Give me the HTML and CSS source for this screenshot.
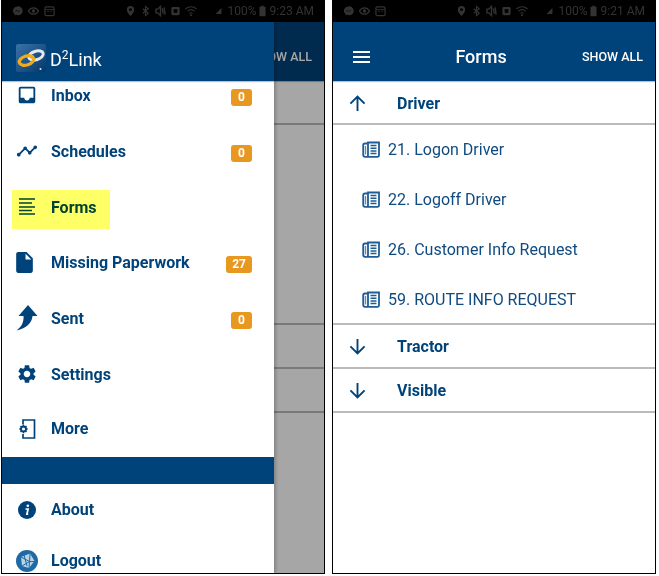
FILE: index.html
```html
<!DOCTYPE html>
<html lang="en">
<head>
    <meta charset="UTF-8">
    <meta name="viewport" content="width=device-width, initial-scale=1.0">
    <title>D2Link - Forms</title>
    <link rel="stylesheet" href="styles.css">
</head>
<body>
    <!-- shared icons -->
    <svg class="sprite" aria-hidden="true">
        <symbol id="st-messenger" viewBox="0 0 12 12"><path d="M6 1a5 4.800 0 0 0-3 8.600V11l1.600-.9A5 4.800 0 1 0 6 1z" fill="#333"/><path d="M3 7l2-2 1.500 1.200L9 5 7 7 5.500 5.800z" fill="#000"/></symbol>
        <symbol id="st-eye" viewBox="0 0 12 12"><path d="M.5 6C2 3.500 4 2.500 6 2.500S10 3.500 11.500 6C10 8.500 8 9.500 6 9.500S2 8.500.5 6z" fill="none" stroke="#333" stroke-width="1.300"/><circle cx="6" cy="6" r="1.800" fill="#333"/></symbol>
        <symbol id="st-face" viewBox="0 0 12 12"><rect x="1" y="1.500" width="10" height="9.500" rx="1.500" fill="none" stroke="#333" stroke-width="1.300"/><path d="M1 4.500h10" stroke="#333"/><path d="M3.500 6.500h1.500M7 6.500h1.500" stroke="#333"/></symbol>
        <symbol id="st-pin" viewBox="0 0 12 12"><path d="M6 .5a4 4 0 0 0-4 4c0 3 4 7 4 7s4-4 4-7a4 4 0 0 0-4-4z" fill="#333"/><circle cx="6" cy="4.500" r="1.600" fill="#000"/></symbol>
        <symbol id="st-bt" viewBox="0 0 12 12"><path d="M3 3.500l6 5-3 2.500V1l3 2.500-6 5" fill="none" stroke="#333" stroke-width="1.200"/></symbol>
        <symbol id="st-mute" viewBox="0 0 12 12"><path d="M1 8V4h2l3-3v10L3 8zM8 3l1 6M10 2l1 8" fill="none" stroke="#333" stroke-width="1.500"/></symbol>
        <symbol id="st-nfc" viewBox="0 0 12 12"><rect x="1.500" y="1.500" width="9" height="9" rx="1.500" fill="#333"/><rect x="4" y="4" width="4" height="4" fill="#000"/></symbol>
        <symbol id="st-wifi" viewBox="0 0 12 12"><path d="M.5 4C3.500 1 8.500 1 11.500 4M2.500 6.200c2-1.800 5-1.800 7 0M4.500 8.300c1-.8 2-.8 3 0" fill="none" stroke="#333" stroke-width="1.100"/><circle cx="6" cy="10.300" r="1" fill="#333"/></symbol>
        <symbol id="st-bars" viewBox="0 0 12 12"><path d="M1 11l10-10v10z" fill="#333"/></symbol>
        <symbol id="st-batt" viewBox="0 0 8 12"><path d="M2.500 0h3v1H7.500v11H.5V1h2z" fill="#333"/></symbol>

        <symbol id="ic-form" viewBox="0 0 18 17"><path d="M6 2.500H3A1.800 1.800 0 0 0 1.200 4.300v9.500A2 2 0 0 0 3.200 15.800H15.500a1.500 1.500 0 0 0 1.500-1.500V1.500H6v12.800a1.500 1.500 0 0 1-1.500 1.500" fill="none" stroke="currentColor" stroke-width="1.800"/><path d="M8.500 4.500h6M8.500 7.200h6M8.500 9.900h6M8.500 12.600h6" stroke="currentColor" stroke-width="1.500"/><path d="M3.500 5v8.500" stroke="currentColor" stroke-width="1.400" opacity=".7"/></symbol>
        <symbol id="ic-up" viewBox="0 0 18 18"><path d="M9 17V2M1.500 9.200L9 1.700l7.500 7.500" fill="none" stroke="currentColor" stroke-width="2"/></symbol>
        <symbol id="ic-down" viewBox="0 0 18 18"><path d="M9 1v15M1.500 8.800L9 16.300l7.500-7.500" fill="none" stroke="currentColor" stroke-width="2"/></symbol>
    </svg>

    <div class="page">
        <!-- menu open -->
        <div class="phone">
            <div class="status-bar">
                <div class="status-group">
                    <svg class="st-icon"><use href="#st-messenger"/></svg>
                    <svg class="st-icon"><use href="#st-eye"/></svg>
                    <svg class="st-icon"><use href="#st-face"/></svg>
                </div>
                <div class="status-group">
                    <svg class="st-icon"><use href="#st-pin"/></svg>
                    <svg class="st-icon"><use href="#st-bt"/></svg>
                    <svg class="st-icon"><use href="#st-mute"/></svg>
                    <svg class="st-icon"><use href="#st-nfc"/></svg>
                    <svg class="st-icon st-wide"><use href="#st-wifi"/></svg>
                    <svg class="st-icon st-bars"><use href="#st-bars"/></svg>
                    <span class="st-text">100%</span>
                    <svg class="st-batt"><use href="#st-batt"/></svg>
                    <span class="st-text">9:23 AM</span>
                </div>
            </div>
            <div class="screen">
                <div class="app-bar app-bar-end">
                    <span class="show-all">SHOW ALL</span>
                </div>
                <div class="group-row"></div>
                <div class="form-list"></div>
                <div class="group-row"></div>
                <div class="group-row"></div>
                <div class="scrim"></div>
                <div class="drawer">
                    <div class="drawer-head">
                        <svg class="logo" viewBox="0 0 30 28">
                            <defs>
                                <linearGradient id="logoBg" x1="0" y1="0" x2="1" y2="1">
                                    <stop offset="0" stop-color="#3a72a8"/>
                                    <stop offset="1" stop-color="#04386a"/>
                                </linearGradient>
                            </defs>
                            <rect width="30" height="28" rx="2" fill="url(#logoBg)"/>
                            <ellipse cx="20" cy="11.500" rx="7.500" ry="4.200" transform="rotate(-18 20 11.500)" fill="none" stroke="#e4e8ec" stroke-width="3"/>
                            <ellipse cx="10.500" cy="16.500" rx="7.500" ry="4.500" transform="rotate(-18 10.500 16.500)" fill="none" stroke="#f0aa1c" stroke-width="3.200"/>
                            <circle cx="24.500" cy="25" r="1" fill="#dfe6ee"/>
                        </svg>
                        <span class="brand">D<sup>2</sup>Link</span>
                    </div>
                    <div class="menu">
                        <div class="menu-item">
                            <svg class="menu-icon" viewBox="0 0 24 24"><path d="M19 3H4.990c-1.110 0-1.980.890-1.980 2L3 19c0 1.100.880 2 1.990 2H19c1.100 0 2-.900 2-2V5c0-1.110-.900-2-2-2zm0 12h-4c0 1.660-1.350 3-3 3s-3-1.340-3-3H4.990V5H19v10z"/></svg>
                            <span class="menu-label">Inbox</span>
                            <span class="badge">0</span>
                        </div>
                        <div class="menu-item">
                            <svg class="menu-icon" viewBox="0 0 24 24"><path d="M23 8c0 1.100-.900 2-2 2-.180 0-.350-.020-.510-.070l-3.560 3.550c.050.160.070.340.070.520 0 1.100-.900 2-2 2s-2-.900-2-2c0-.180.020-.360.070-.520l-2.550-2.550c-.160.050-.340.070-.520.070s-.360-.020-.520-.070l-4.550 4.560c.050.160.070.330.070.510 0 1.100-.900 2-2 2s-2-.900-2-2 .900-2 2-2c.180 0 .350.020.510.070l4.560-4.550C8.020 9.360 8 9.180 8 9c0-1.100.900-2 2-2s2 .900 2 2c0 .180-.020.360-.070.520l2.550 2.550c.160-.050.340-.070.520-.070s.360.020.520.070l3.550-3.560C19.020 8.350 19 8.180 19 8c0-1.100.900-2 2-2s2 .900 2 2z"/></svg>
                            <span class="menu-label">Schedules</span>
                            <span class="badge">0</span>
                        </div>
                        <div class="menu-item">
                            <svg class="menu-icon" viewBox="0 0 22 22"><path d="M3 3h16M3 7h13M3 11h16M3 14.500h13M3 18h16" fill="none" stroke="currentColor" stroke-width="1.700"/></svg>
                            <span class="menu-label">Forms</span>
                            <span class="highlight"></span>
                        </div>
                        <div class="menu-item menu-item-tight">
                            <svg class="menu-icon icon-file" viewBox="0 0 24 24"><path d="M6 2c-1.100 0-1.990.900-1.990 2L4 20c0 1.100.890 2 1.990 2H18c1.100 0 2-.900 2-2V8l-6-6H6zm7 7V3.500L18.500 9H13z"/></svg>
                            <span class="menu-label">Missing Paperwork</span>
                            <span class="badge">27</span>
                        </div>
                        <div class="menu-item">
                            <svg class="menu-icon icon-sent" viewBox="0 0 22 26"><path d="M12 0L21.500 11H16.500C16 17.500 10.500 23.500 .5 25.500 5.500 22 8 17 7.500 11H2.500z"/></svg>
                            <span class="menu-label">Sent</span>
                            <span class="badge">0</span>
                        </div>
                        <div class="menu-item">
                            <svg class="menu-icon" viewBox="0 0 24 24"><path d="M19.140 12.940c.040-.300.060-.610.060-.940 0-.320-.020-.640-.070-.940l2.030-1.580c.180-.140.230-.410.120-.610l-1.920-3.320c-.120-.220-.370-.290-.590-.220l-2.390.960c-.500-.380-1.030-.700-1.620-.940l-.360-2.540c-.040-.240-.240-.410-.480-.410h-3.840c-.240 0-.430.170-.470.410l-.360 2.540c-.590.240-1.130.570-1.620.940l-2.390-.960c-.220-.080-.470 0-.590.220L2.740 8.870c-.120.210-.080.470.120.610l2.030 1.580c-.050.300-.090.630-.090.940s.020.640.070.940l-2.030 1.580c-.180.140-.230.410-.12.610l1.920 3.320c.120.220.370.290.590.220l2.390-.960c.500.380 1.030.700 1.620.940l.360 2.540c.050.240.240.410.480.410h3.840c.240 0 .440-.170.470-.410l.360-2.540c.590-.240 1.130-.560 1.620-.940l2.390.960c.220.080.470 0 .590-.220l1.920-3.320c.120-.220.070-.470-.120-.61l-2.010-1.580zM12 15.600c-1.980 0-3.600-1.620-3.600-3.600s1.620-3.600 3.600-3.600 3.600 1.620 3.600 3.600-1.620 3.600-3.600 3.600z"/></svg>
                            <span class="menu-label">Settings</span>
                        </div>
                        <div class="menu-item menu-item-more">
                            <svg class="menu-icon" viewBox="0 0 22 22"><path d="M7 6.500V2h11.500v18H7V16" fill="none" stroke="currentColor" stroke-width="1.700"/><circle cx="7.500" cy="11" r="2.500" fill="none" stroke="currentColor" stroke-width="1.900"/><path d="M7.500 6.800v1.500M7.500 13.700v1.500M3.300 11h1.500M10.200 11h1.500M4.500 8l1 1M9.500 13l1 1M4.500 14l1-1M9.500 9l1-1" stroke="currentColor" stroke-width="1.400"/></svg>
                            <span class="menu-label">More</span>
                        </div>
                        <div class="menu-divider"></div>
                        <div class="menu-item menu-item-low">
                            <svg class="menu-icon" viewBox="0 0 22 22"><circle cx="11" cy="11" r="9"/><circle cx="11.800" cy="6.800" r="1.300" fill="#fff"/><path d="M9.500 10h2.600l-1.200 5.200h1.300" fill="none" stroke="#fff" stroke-width="1.700"/></svg>
                            <span class="menu-label">About</span>
                        </div>
                        <div class="menu-item menu-item-low">
                            <svg class="menu-icon" viewBox="0 0 22 22"><circle cx="11" cy="11" r="11" fill="#1f6aa5"/><path d="M5 7L14 3.500 18.500 11 13 18 6 16z" fill="#b9d3e6"/><path d="M5 7l8.500 4.500L6 16M14 3.500L13.500 11.500 13 18M13.500 11.500H18.500M8 5l3 11" fill="none" stroke="#1f6aa5" stroke-width="1"/></svg>
                            <span class="menu-label">Logout</span>
                        </div>
                    </div>
                </div>
            </div>
        </div>

        <!-- forms list -->
        <div class="phone">
            <div class="status-bar">
                <div class="status-group">
                    <svg class="st-icon"><use href="#st-messenger"/></svg>
                    <svg class="st-icon"><use href="#st-eye"/></svg>
                    <svg class="st-icon"><use href="#st-face"/></svg>
                </div>
                <div class="status-group">
                    <svg class="st-icon"><use href="#st-pin"/></svg>
                    <svg class="st-icon"><use href="#st-bt"/></svg>
                    <svg class="st-icon"><use href="#st-mute"/></svg>
                    <svg class="st-icon"><use href="#st-nfc"/></svg>
                    <svg class="st-icon st-wide"><use href="#st-wifi"/></svg>
                    <svg class="st-icon st-bars"><use href="#st-bars"/></svg>
                    <span class="st-text">100%</span>
                    <svg class="st-batt"><use href="#st-batt"/></svg>
                    <span class="st-text">9:21 AM</span>
                </div>
            </div>
            <div class="screen">
                <div class="app-bar">
                    <svg class="hamburger" viewBox="0 0 27 12"><path d="M0 1h17M0 6h17M0 11h17" stroke="#fff" stroke-width="2"/></svg>
                    <span class="app-title">Forms</span>
                    <span class="show-all">SHOW ALL</span>
                </div>
                <div class="group-row group-row-first">
                    <svg class="arrow"><use href="#ic-up"/></svg>
                    <span class="group-name">Driver</span>
                </div>
                <div class="form-list">
                    <div class="form-item">
                        <svg class="form-icon"><use href="#ic-form"/></svg>
                        <span>21. Logon Driver</span>
                    </div>
                    <div class="form-item">
                        <svg class="form-icon"><use href="#ic-form"/></svg>
                        <span>22. Logoff Driver</span>
                    </div>
                    <div class="form-item">
                        <svg class="form-icon"><use href="#ic-form"/></svg>
                        <span>26. Customer Info Request</span>
                    </div>
                    <div class="form-item">
                        <svg class="form-icon"><use href="#ic-form"/></svg>
                        <span>59. ROUTE INFO REQUEST</span>
                    </div>
                </div>
                <div class="group-row">
                    <svg class="arrow"><use href="#ic-down"/></svg>
                    <span class="group-name">Tractor</span>
                </div>
                <div class="group-row">
                    <svg class="arrow"><use href="#ic-down"/></svg>
                    <span class="group-name">Visible</span>
                </div>
            </div>
        </div>
    </div>
</body>
</html>
```

FILE: styles.css
```css
body {
    font-family: Roboto, 'Liberation Sans', Arial, sans-serif;
    margin: 0;
    background-color: #fff;
}
.sprite {
    position: absolute;
    width: 0;
    height: 0;
}
.page {
    display: flex;
    gap: 7px;
    padding-left: 1px;
}
.phone {
    width: 324px;
    height: 574px;
    box-sizing: border-box;
    border: 1px solid #000;
    border-top: none;
    display: flex;
    flex-direction: column;
    overflow: hidden;
    background-color: #fff;
}

/* status bar */
.status-bar {
    height: 22px;
    flex: none;
    background-color: #000;
    display: flex;
    justify-content: space-between;
    align-items: center;
    padding: 0 10px;
}
.status-group {
    display: flex;
    align-items: center;
    gap: 4px;
}
.status-group:first-child {
    gap: 5px;
}
.st-icon {
    width: 11px;
    height: 12px;
}
.st-wide {
    width: 12px;
    margin-right: 14px;
}
.st-bars {
    width: 7px;
    margin-right: 2px;
}
.st-batt {
    width: 7px;
    height: 12px;
    margin-left: -2px;
}
.st-text {
    color: #333;
    font-size: 12px;
    line-height: 22px;
}

/* app bar */
.screen {
    position: relative;
    flex: 1;
    overflow: hidden;
}
.app-bar {
    height: 59px;
    box-sizing: border-box;
    background-color: #00437a;
    box-shadow: 0 1px 1px rgba(0,0,0,0.25);
    display: flex;
    justify-content: space-between;
    align-items: center;
    padding: 10px 12px 0 20px;
    color: #fff;
}
.app-bar-end {
    justify-content: flex-end;
}
.hamburger {
    width: 27px;
    height: 12px;
}
.app-title {
    font-size: 18px;
    font-weight: 500;
}
.show-all {
    font-size: 12.5px;
    font-weight: 500;
}

/* forms list */
.group-row {
    height: 44px;
    box-sizing: border-box;
    border-bottom: 2px solid #bbb;
    display: flex;
    align-items: center;
    padding-left: 16px;
    color: #00437a;
}
.group-row-first {
    padding-top: 2px;
}
.arrow {
    width: 17px;
    height: 17px;
}
.group-name {
    margin-left: 31px;
    font-size: 16px;
    font-weight: 700;
}
.form-list {
    height: 201px;
    margin-top: -1px;
    box-sizing: border-box;
    border-bottom: 2px solid #bbb;
    display: flex;
    flex-direction: column;
}
.form-item {
    height: 50px;
    flex: none;
    display: flex;
    align-items: center;
    gap: 8px;
    padding-left: 29px;
    font-size: 16px;
    color: #0f4a80;
}
.form-icon {
    width: 18px;
    height: 17px;
    color: #1f5c96;
}

/* menu drawer */
.scrim {
    position: absolute;
    inset: 0;
    background-color: rgba(0,0,0,0.35);
}
.drawer {
    position: absolute;
    top: 0;
    left: 0;
    bottom: 0;
    width: 272px;
    background-color: #fff;
    box-shadow: 2px 0 3px rgba(0,0,0,0.2);
    overflow: hidden;
}
.drawer-head {
    position: relative;
    z-index: 1;
    height: 59px;
    box-sizing: border-box;
    background-color: #00437a;
    box-shadow: 0 1px 1px rgba(0,0,0,0.25);
    display: flex;
    align-items: center;
    gap: 4px;
    padding: 12px 0 0 14px;
}
.logo {
    width: 30px;
    height: 28px;
}
.brand {
    color: #fff;
    font-size: 18px;
    margin-top: 3px;
}
.brand sup {
    font-size: 12px;
    line-height: 0;
}
.menu {
    margin-top: -14px;
}
.menu-item {
    position: relative;
    height: 56px;
    box-sizing: border-box;
    display: flex;
    align-items: center;
    padding: 0 22px 0 14px;
    color: #00437a;
}
.menu-item-tight {
    margin-top: -1px;
}
.menu-item-more {
    margin-top: -2px;
    height: 57px;
}
.menu-item-low {
    height: 51px;
}
.menu-icon {
    width: 22px;
    height: 22px;
    flex: none;
    fill: currentColor;
}
.icon-file {
    margin: 0 1px 0 -4px;
    width: 25px;
    height: 25px;
}
.icon-sent {
    height: 26px;
}
.menu-label {
    margin-left: 13px;
    font-size: 16px;
    font-weight: 700;
    flex: 1;
}
.badge {
    min-width: 21px;
    height: 17px;
    box-sizing: border-box;
    margin-top: 4px;
    padding: 0 6px;
    border-radius: 3px;
    background-color: #e8981f;
    color: #fff;
    font-size: 12px;
    font-weight: 700;
    line-height: 17px;
    text-align: center;
}
.highlight {
    position: absolute;
    left: 10px;
    top: 11px;
    width: 98px;
    height: 39px;
    background-color: #ffff66;
    mix-blend-mode: multiply;
}
.menu-divider {
    height: 27px;
    background-color: #00437a;
}
```
